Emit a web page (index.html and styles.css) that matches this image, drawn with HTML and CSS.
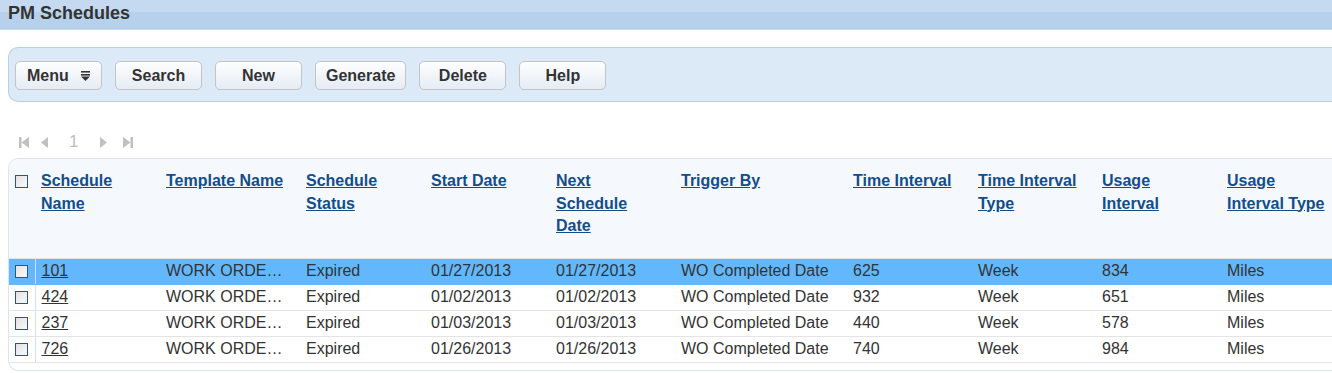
FILE: index.html
```html
<!DOCTYPE html>
<html>
<head>
	<meta charset="UTF-8">
	<title>PM Schedules</title>
<link rel="stylesheet" href="styles.css">
</head>
<body>
	<div class="titlebar">PM Schedules</div>
	<div class="toolbar">
		<button class="btn btn-menu" type="button">Menu
			<svg width="9" height="10" viewBox="0 0 9 10"><rect x="0" y="0" width="9" height="1.6" fill="#333"/><rect x="0" y="3" width="9" height="1.6" fill="#333"/><polygon points="0,5.6 9,5.6 4.5,10" fill="#333"/></svg>
		</button>
		<button class="btn" type="button">Search</button>
		<button class="btn" type="button">New</button>
		<button class="btn" type="button">Generate</button>
		<button class="btn" type="button">Delete</button>
		<button class="btn" type="button">Help</button>
	</div>
	<div class="pager">
		<svg class="pg pg-first" width="10" height="11" viewBox="0 0 10 11"><rect x="0" y="0" width="2.5" height="11" fill="#c0c0c0"/><polygon points="10,0 10,11 2.5,5.5" fill="#c0c0c0"/></svg>
		<svg class="pg pg-prev" width="9" height="11" viewBox="0 0 9 11"><polygon points="8,0 8,11 1,5.5" fill="#c0c0c0"/></svg>
		<span class="pg-num">1</span>
		<svg class="pg pg-next" width="9" height="11" viewBox="0 0 9 11"><polygon points="1,0 1,11 8,5.5" fill="#c0c0c0"/></svg>
		<svg class="pg pg-last" width="10" height="11" viewBox="0 0 10 11"><polygon points="0,0 0,11 7.5,5.5" fill="#c0c0c0"/><rect x="7.5" y="0" width="2.5" height="11" fill="#c0c0c0"/></svg>
	</div>
	<div class="grid">
		<table>
			<colgroup>
				<col style="width:26px">
				<col style="width:125px">
				<col style="width:140px">
				<col style="width:125px">
				<col style="width:125px">
				<col style="width:125px">
				<col style="width:172px">
				<col style="width:125px">
				<col style="width:124px">
				<col style="width:125px">
				<col style="width:125px">
			</colgroup>
			<thead>
				<tr>
					<th class="cb"><span class="check"></span></th>
					<th><a href="#">Schedule Name</a></th>
					<th><a href="#">Template Name</a></th>
					<th><a href="#">Schedule Status</a></th>
					<th><a href="#">Start Date</a></th>
					<th><a href="#">Next Schedule Date</a></th>
					<th><a href="#">Trigger By</a></th>
					<th><a href="#">Time Interval</a></th>
					<th><a href="#">Time Interval Type</a></th>
					<th><a href="#">Usage Interval</a></th>
					<th><a href="#">Usage Interval Type</a></th>
				</tr>
			</thead>
			<tbody>
				<tr class="selected">
					<td class="cb"><span class="check"></span></td>
					<td><a href="#">101</a></td>
					<td>WORK ORDE…</td>
					<td>Expired</td>
					<td>01/27/2013</td>
					<td>01/27/2013</td>
					<td>WO Completed Date</td>
					<td>625</td>
					<td>Week</td>
					<td>834</td>
					<td>Miles</td>
				</tr>
				<tr>
					<td class="cb"><span class="check"></span></td>
					<td><a href="#">424</a></td>
					<td>WORK ORDE…</td>
					<td>Expired</td>
					<td>01/02/2013</td>
					<td>01/02/2013</td>
					<td>WO Completed Date</td>
					<td>932</td>
					<td>Week</td>
					<td>651</td>
					<td>Miles</td>
				</tr>
				<tr>
					<td class="cb"><span class="check"></span></td>
					<td><a href="#">237</a></td>
					<td>WORK ORDE…</td>
					<td>Expired</td>
					<td>01/03/2013</td>
					<td>01/03/2013</td>
					<td>WO Completed Date</td>
					<td>440</td>
					<td>Week</td>
					<td>578</td>
					<td>Miles</td>
				</tr>
				<tr>
					<td class="cb"><span class="check"></span></td>
					<td><a href="#">726</a></td>
					<td>WORK ORDE…</td>
					<td>Expired</td>
					<td>01/26/2013</td>
					<td>01/26/2013</td>
					<td>WO Completed Date</td>
					<td>740</td>
					<td>Week</td>
					<td>984</td>
					<td>Miles</td>
				</tr>
			</tbody>
		</table>
	</div>
</body>
</html>
```

FILE: styles.css
```css
html, body {
	margin: 0;
	overflow: hidden;
}
body {
	font-family: "Liberation Sans", Arial, sans-serif;
	color: #333;
	background: #fff;
}
.titlebar {
	height: 27px;
	padding: 0 0 2px 8px;
	border-bottom: 1px solid #c8dcf1;
	background: linear-gradient(#c5daf0 0, #c5daf0 12px, #b6d1eb 12px, #b6d1eb 100%);
	font: bold 18px/27px "Liberation Sans", Arial, sans-serif;
	color: #333;
}
.toolbar {
	display: flex;
	gap: 13px;
	margin: 17px 0 0 8px;
	padding: 13px 0 11px 6px;
	border: 1px solid #b8cfe6;
	border-right: none;
	border-radius: 10px 0 0 10px;
	background: #dce9f6;
}
.btn {
	display: flex;
	align-items: center;
	justify-content: center;
	gap: 12px;
	box-sizing: border-box;
	height: 29px;
	min-width: 87px;
	padding: 0 10px;
	border: 1px solid #c4c4c4;
	border-radius: 5px;
	background: linear-gradient(#fefefe, #e5ecf5);
	font: bold 16px "Liberation Sans", Arial, sans-serif;
	color: #333;
}
.btn-menu {
	justify-content: flex-start;
	padding-left: 11px;
}
.pager {
	display: flex;
	align-items: center;
	height: 20px;
	padding: 30px 0 6px 0;
}
.pg-first {
	margin-left: 19px;
}
.pg-prev {
	margin-left: 11px;
}
.pg-num {
	margin-left: 20px;
	font-size: 17px;
	color: #bdbdbd;
}
.pg-next {
	margin-left: 21px;
}
.pg-last {
	margin-left: 15px;
}
.grid {
	margin-left: 8px;
	padding-bottom: 7px;
	border: 1px solid #dbe5f0;
	border-right: none;
	border-radius: 10px 0 0 10px;
	overflow: hidden;
}
table {
	table-layout: fixed;
	width: 1337px;
	border-collapse: collapse;
	font-size: 16px;
}
th {
	height: 99px;
	padding: 11px 14px 0 6px;
	box-sizing: border-box;
	vertical-align: top;
	text-align: left;
	font-weight: bold;
	line-height: 22.5px;
	background: #f5f9fd;
	border-bottom: 1px solid #dbe5f0;
}
th a {
	color: #124d8c;
}
th.cb {
	padding: 0 0 0 6px;
}
th.cb .check {
	margin-top: 16px;
}
td {
	height: 24px;
	padding: 0 14px 1px 6px;
	line-height: 24px;
	white-space: nowrap;
	overflow: hidden;
	text-overflow: ellipsis;
	border-bottom: 1px solid #e4e4e4;
	color: #333;
}
td a {
	color: #333;
}
td.cb {
	padding: 0 0 0 6px;
	border-right: 1px solid #d2e1f0;
}
.selected td {
	background: #63b8fd;
	border-bottom-color: #63b8fd;
}
.check {
	display: block;
	width: 11px;
	height: 11px;
	border: 1px solid #2a5682;
	background: linear-gradient(135deg, #e2e2e2, #fafafa);
}
td .check {
	margin-top: 1px;
}
```
